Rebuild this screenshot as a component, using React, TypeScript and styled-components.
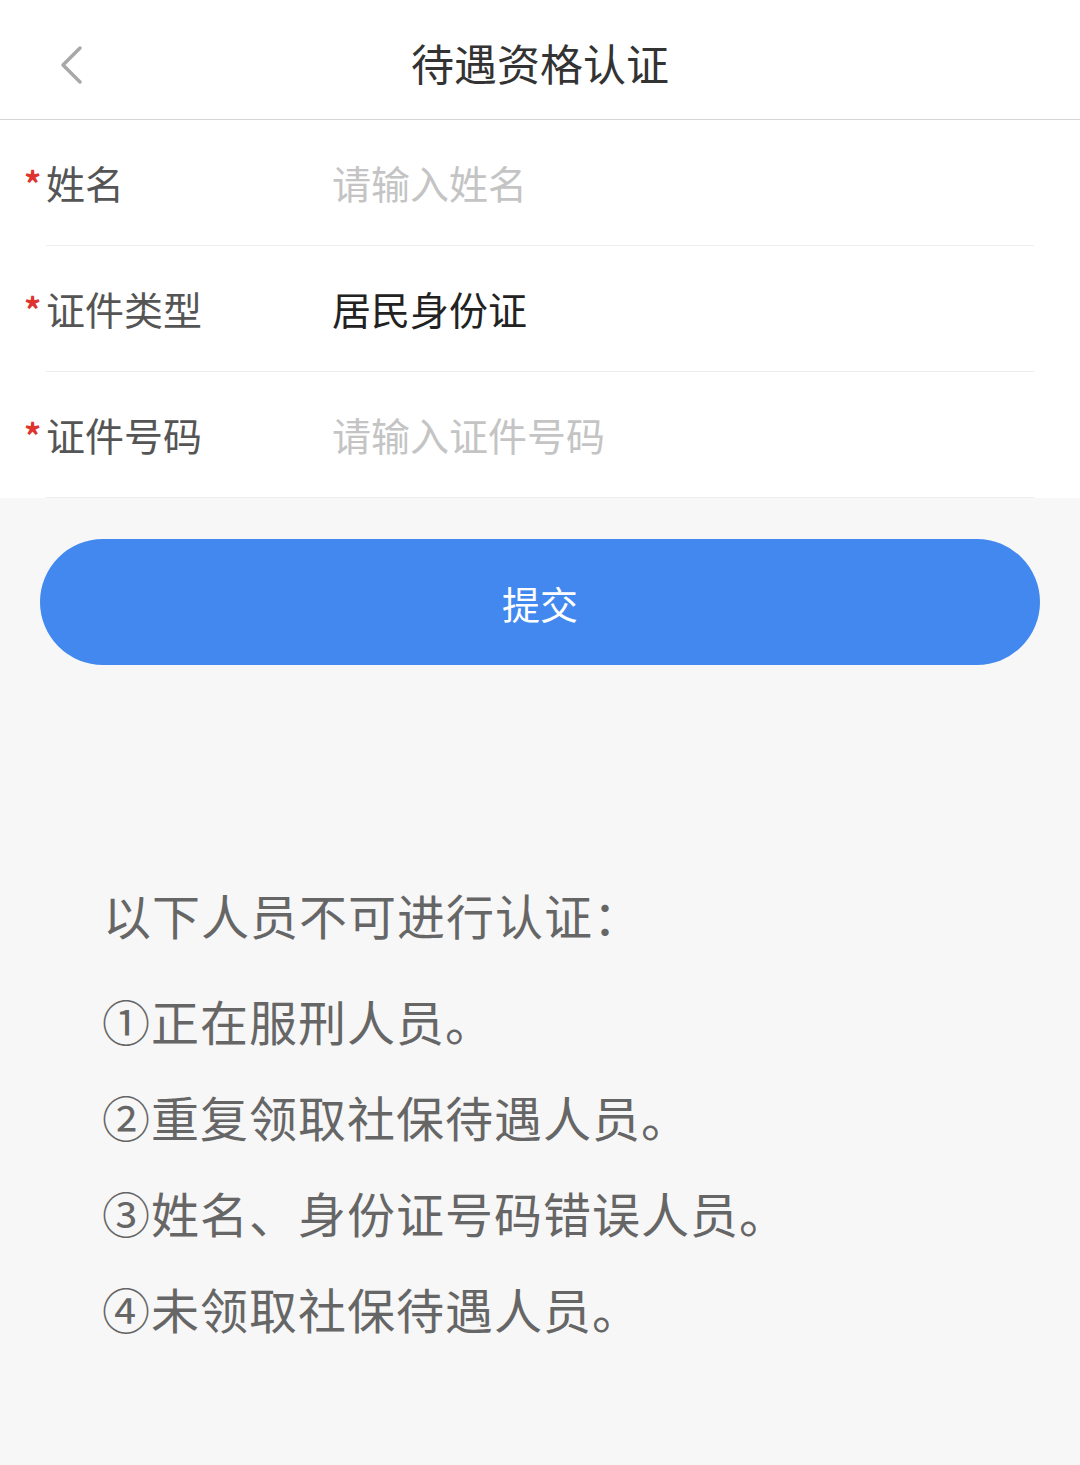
import React from "react";
import styled, { createGlobalStyle } from "styled-components";

const Global = createGlobalStyle`
  html, body { margin: 0; padding: 0; background: #f7f7f7; }
  body { font-family: "Noto Sans CJK SC", "Noto Sans", sans-serif; }
  * { box-sizing: border-box; }
`;

const Page = styled.div`
  width: 1080px;
  min-height: 1465px;
  background: #f7f7f7;
`;

const Header = styled.header`
  height: 120px;
  background: #fff;
  border-bottom: 1px solid #d6d6d6;
  display: grid;
  grid-template-columns: 140px 1fr 140px;
  align-items: center;
`;

const Back = styled.button`
  border: 0;
  background: none;
  padding: 10px 0 0 56px;
  height: 100%;
  display: flex;
  align-items: center;
  justify-content: flex-start;
  cursor: pointer;
`;

const Title = styled.h1`
  margin: 0;
  text-align: center;
  font-size: 43px;
  font-weight: 400;
  color: #333;
  line-height: 1;
  padding-top: 6px;
`;

const Form = styled.section`
  background: #fff;
`;

const Row = styled.div`
  height: 126px;
  margin-left: 46px;
  margin-right: 46px;
  border-bottom: 1px solid #ededed;
  display: flex;
  align-items: center;
  position: relative;
`;

const Star = styled.span`
  position: absolute;
  left: -22px;
  top: 46px;
  color: #e0332e;
  font-size: 34px;
  font-weight: 700;
  line-height: 1;
`;

const Label = styled.span`
  width: 286px;
  font-size: 39px;
  color: #555;
  line-height: 1;
`;

const Value = styled.span<{ $placeholder?: boolean }>`
  font-size: 39px;
  line-height: 1;
  color: ${(p) => (p.$placeholder ? "#c4c4c4" : "#222")};
`;

const Actions = styled.div`
  padding: 41px 40px 0 40px;
`;

const Submit = styled.button`
  width: 1000px;
  height: 126px;
  border: 0;
  border-radius: 63px;
  background: #4288ef;
  color: #fff;
  font-family: inherit;
  font-size: 38px;
  cursor: pointer;
`;

const Notes = styled.section`
  padding: 225px 0 0 102px;
  color: #666;
`;

const NoteTitle = styled.p`
  margin: 0 0 58px 1px;
  font-size: 48px;
  letter-spacing: 1px;
  line-height: 1;
`;

const NoteList = styled.ul`
  list-style: none;
  margin: 0;
  padding: 0;
  display: flex;
  flex-direction: column;
  gap: 48px;
`;

const NoteItem = styled.li`
  font-size: 48px;
  letter-spacing: 1px;
  line-height: 1;
`;

const fields = [
  { label: "姓名", value: "请输入姓名", placeholder: true },
  { label: "证件类型", value: "居民身份证", placeholder: false },
  { label: "证件号码", value: "请输入证件号码", placeholder: true },
];

const notes = [
  "①正在服刑人员。",
  "②重复领取社保待遇人员。",
  "③姓名、身份证号码错误人员。",
  "④未领取社保待遇人员。",
];

export default function App() {
  return (
    <Page>
      <Global />
      <Header>
        <Back aria-label="返回">
          <svg width="30" height="40" viewBox="0 0 30 40" fill="none">
            <path d="M24 3 L7 20 L24 37" stroke="#a8a8a8" strokeWidth="3.5" strokeLinecap="round" strokeLinejoin="round" />
          </svg>
        </Back>
        <Title>待遇资格认证</Title>
        <div />
      </Header>
      <Form>
        {fields.map((f) => (
          <Row key={f.label}>
            <Star>*</Star>
            <Label>{f.label}</Label>
            <Value $placeholder={f.placeholder}>{f.value}</Value>
          </Row>
        ))}
      </Form>
      <Actions>
        <Submit>提交</Submit>
      </Actions>
      <Notes>
        <NoteTitle>以下人员不可进行认证：</NoteTitle>
        <NoteList>
          {notes.map((n) => (
            <NoteItem key={n}>{n}</NoteItem>
          ))}
        </NoteList>
      </Notes>
    </Page>
  );
}
